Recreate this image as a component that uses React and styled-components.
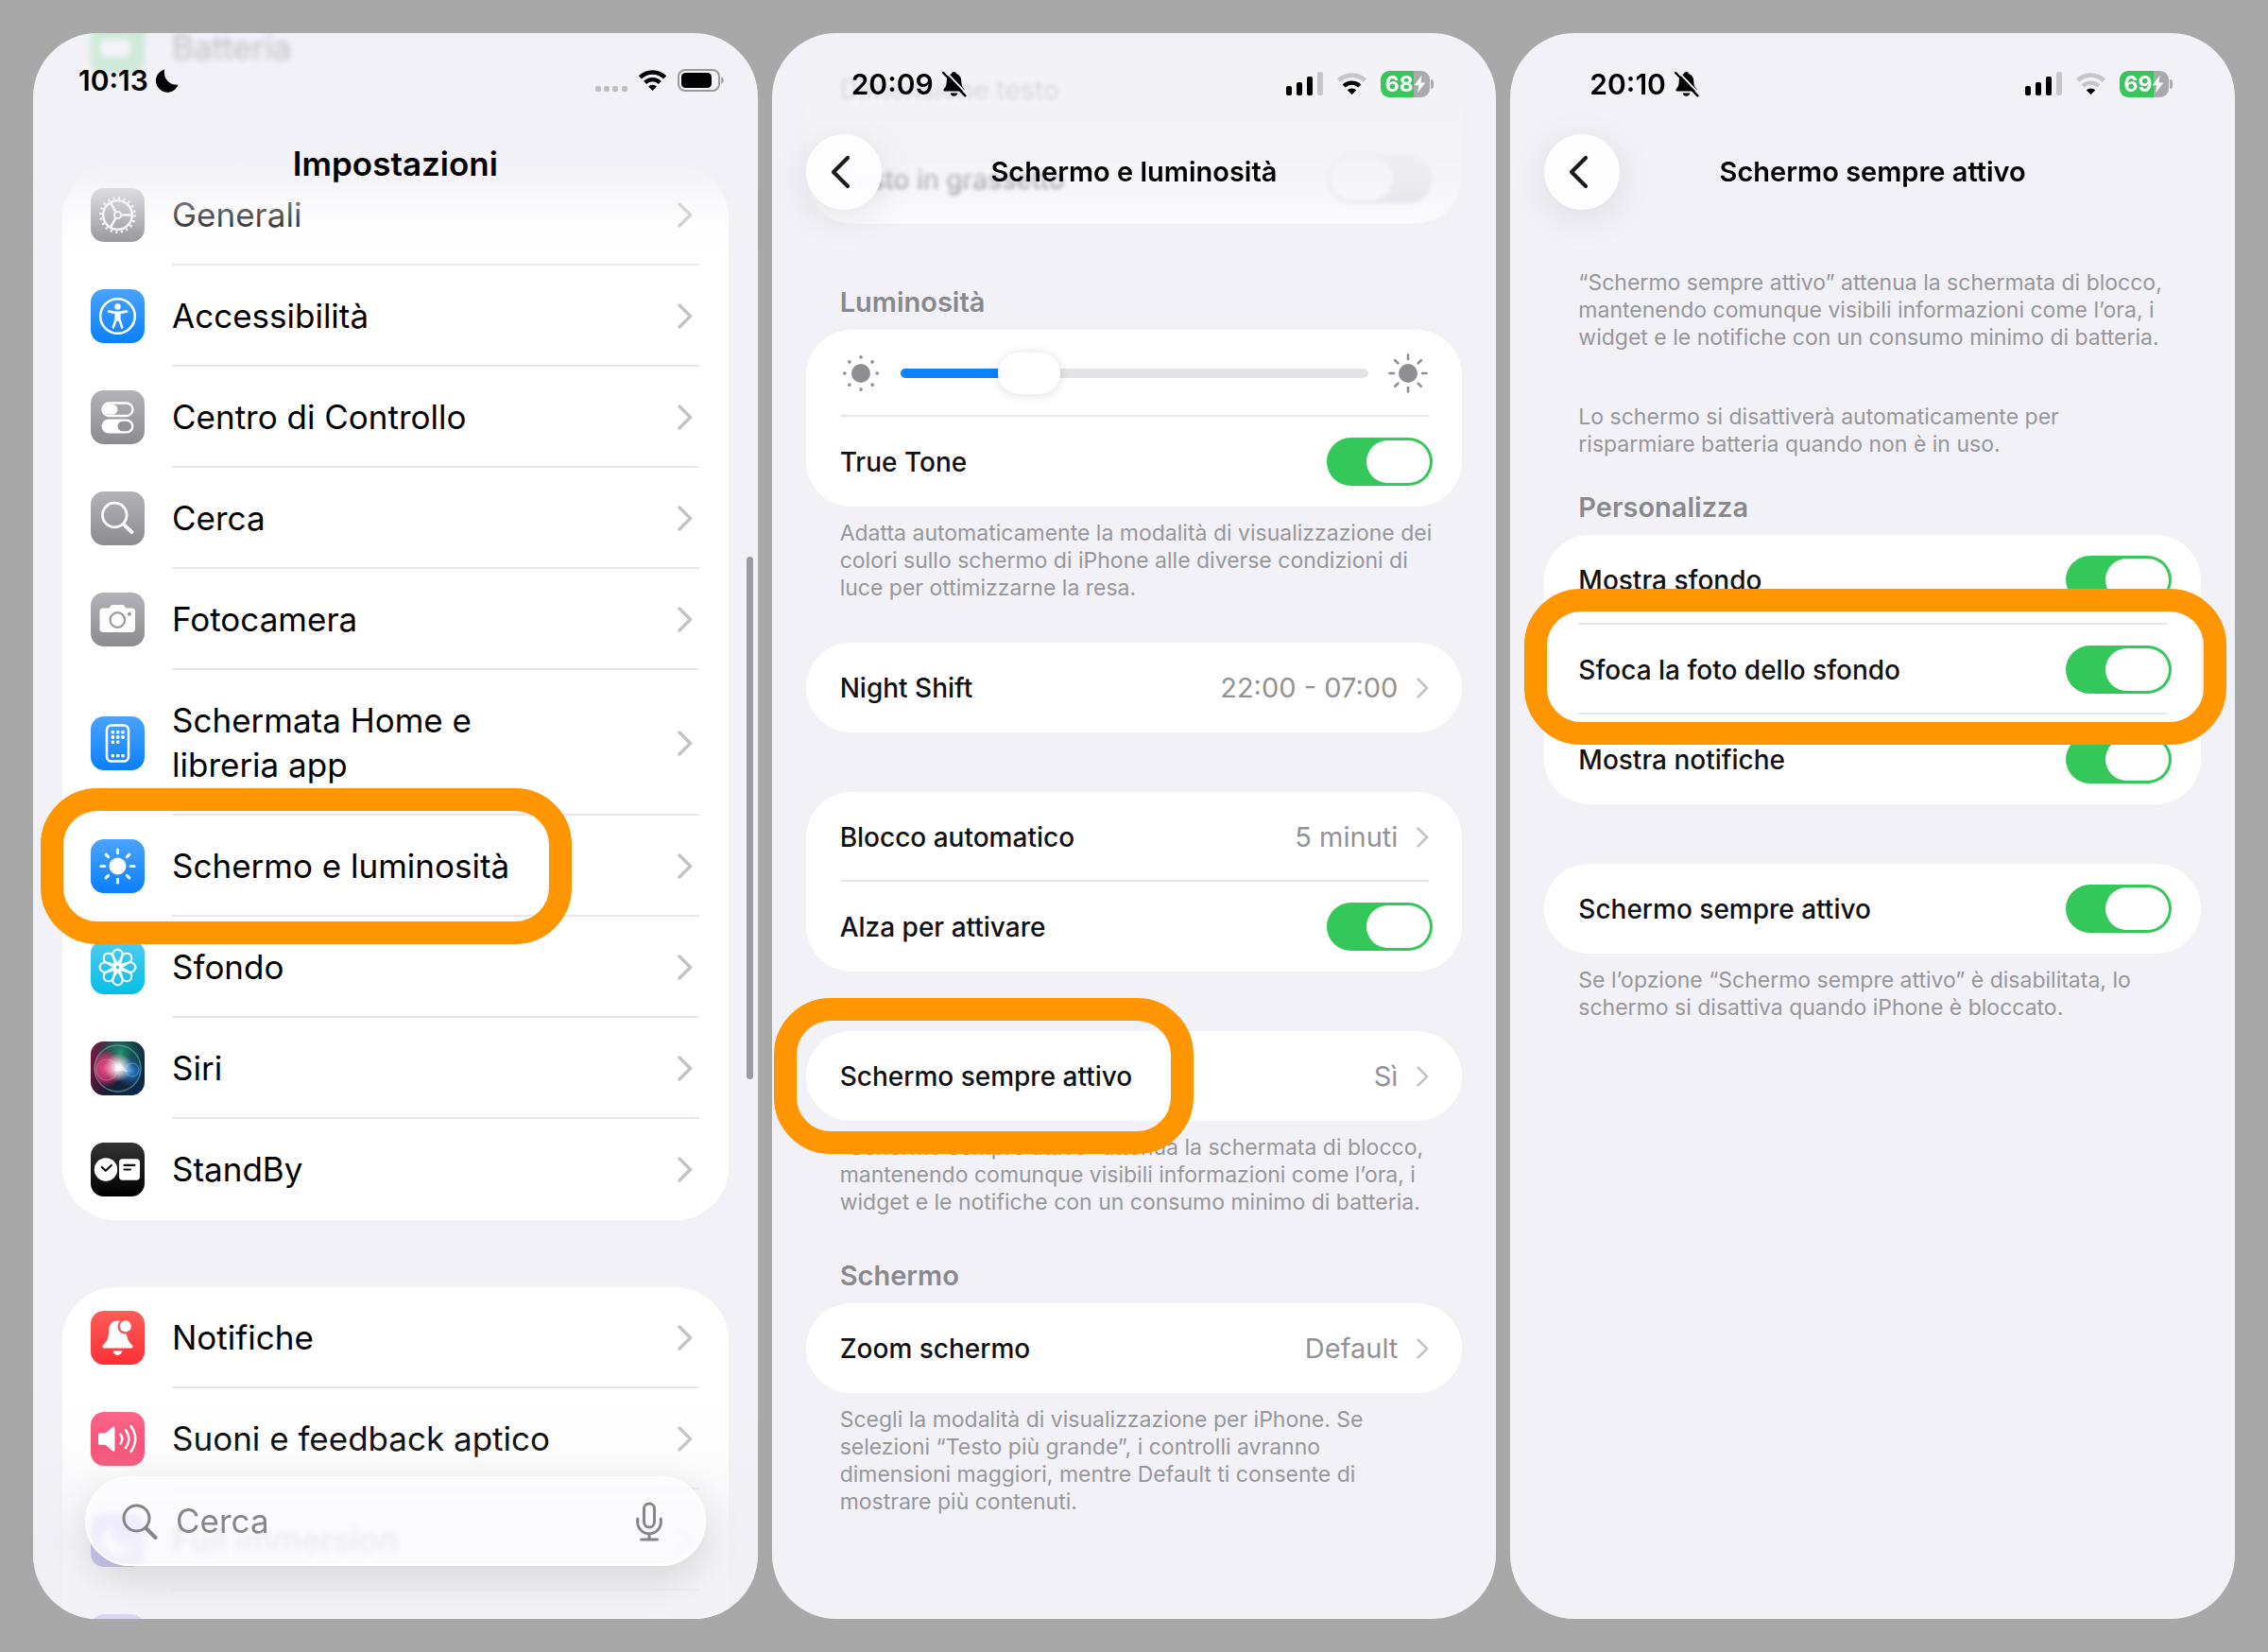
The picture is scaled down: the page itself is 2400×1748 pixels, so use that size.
import React, { useState } from 'react';
import styled, { createGlobalStyle, css } from 'styled-components';

const GlobalStyle = createGlobalStyle`
  * { box-sizing: border-box; }
  html, body, #root { height: 100%; }
  body {
    margin: 0;
    background: #a8a8a8;
    font-family: Inter, "Liberation Sans", sans-serif;
    color: #000;
  }
`;

/* ---------- shell ---------- */

const Page = styled.main`
  display: grid;
  grid-template-columns: repeat(3, minmax(0, 1fr));
  grid-template-rows: minmax(0, 1fr);
  gap: 15px;
  height: 100vh;
  padding: 35px;
`;

const Phone = styled.section`
  position: relative;
  overflow: hidden;
  border-radius: 68px;
  background: #f2f1f7;
`;

const TopBar = styled.header`
  position: absolute;
  inset: 0 0 auto 0;
  z-index: 4;
  padding-bottom: ${(p) => (p.$fade ? 66 : 0)}px;
  background: ${(p) =>
    p.$fade
      ? 'linear-gradient(to bottom, rgba(242,241,247,0) 0, rgba(242,241,247,.5) 80px, #f2f1f7 110px, rgba(242,241,247,.98) 134px, rgba(242,241,247,.72) 158px, rgba(244,243,248,.42) 185px, rgba(248,248,251,.22) 205px, rgba(255,255,255,0) 100%)'
      : 'none'};
`;

const StatusBar = styled.div`
  display: flex;
  align-items: center;
  justify-content: space-between;
  height: ${(p) => (p.$large ? 100 : 107)}px;
  padding: ${(p) => (p.$large ? '0 36px 0 48px' : '0 66px 0 84px')};
`;

const Clock = styled.span`
  display: flex;
  align-items: center;
  gap: 8px;
  font-size: 30px;
  line-height: 36px;
  font-weight: 600;
`;

const Signals = styled.span`
  display: flex;
  align-items: center;
  gap: ${(p) => (p.$large ? 11 : 14)}px;
`;

const Nav = styled.nav`
  display: grid;
  grid-template-columns: 80px 1fr 80px;
  align-items: center;
  justify-items: center;
  height: ${(p) => (p.$large ? 76 : 80)}px;
  padding: 0 36px;
`;

const Title = styled.h1`
  grid-column: 2;
  margin: 0;
  font-size: ${(p) => (p.$large ? 35 : 29)}px;
  line-height: 42px;
  font-weight: 600;
  white-space: nowrap;
`;

const BackButton = styled.button`
  display: grid;
  place-items: center;
  width: 80px;
  height: 80px;
  padding: 0 8px 0 0;
  border: 0;
  border-radius: 50%;
  background: rgba(253, 253, 255, 0.96);
  box-shadow: 0 8px 40px rgba(0, 0, 0, 0.09);
`;

const BatteryPill = styled.span`
  position: relative;
  display: flex;
  align-items: center;
  justify-content: center;
  width: 52px;
  height: 28px;
  margin-right: 4px;
  border-radius: 9px;
  background: linear-gradient(to right, #35c759 ${(p) => p.$level}%, #aaaaae ${(p) => p.$level}%);
  color: #fff;
  font-size: 23px;
  line-height: 28px;
  font-weight: 700;

  &::after {
    content: '';
    position: absolute;
    left: 53px;
    top: 9px;
    width: 3px;
    height: 10px;
    border-radius: 0 3px 3px 0;
    background: #aaaaae;
  }
`;

/* ---------- lists ---------- */

const Content = styled.div`
  display: flex;
  flex-direction: column;
  padding: ${(p) => p.$top}px ${(p) => p.$side}px 0;
`;

const Card = styled.div`
  margin-top: ${(p) => p.$gap || 0}px;
  border-radius: ${(p) => p.$radius || 48}px;
  background: #fff;
`;

const SectionTitle = styled.h2`
  margin: ${(p) => p.$gap}px 36px 11px;
  font-size: 29px;
  line-height: 36px;
  font-weight: 600;
  color: #88888d;
`;

const Footnote = styled.p`
  margin: ${(p) => (p.$gap === undefined ? 14 : p.$gap)}px 24px 0 36px;
  font-size: 23px;
  line-height: 29px;
  color: #96969b;
  white-space: pre-line;
`;

const Ring = styled.span`
  position: absolute;
  z-index: 3;
  top: ${(p) => p.$top}px;
  left: ${(p) => p.$left}px;
  right: ${(p) => p.$right}px;
  height: 165px;
  border: 24px solid #ff9500;
  border-radius: 60px;
  pointer-events: none;
`;

const rowLine = css`
  ${(p) =>
    p.$line &&
    css`
      background-image: linear-gradient(#e8e8eb, #e8e8eb);
      background-repeat: no-repeat;
      background-position: 0 100%;
      background-size: 100% 2px;
    `}
`;

const AppRow = styled.a`
  position: relative;
  display: flex;
  gap: 29px;
  align-items: center;
  height: ${(p) => (p.$tall ? 154 : 107)}px;
  padding: 0 31px 0 30px;
  color: #000;
  text-decoration: none;
`;

const AppRowBody = styled.span`
  flex: 1;
  display: flex;
  align-items: center;
  justify-content: space-between;
  height: 100%;
  padding-right: 7px;
  font-size: 35px;
  line-height: 47px;
  white-space: pre-line;
  ${rowLine}
`;

const optionRow = css`
  position: relative;
  display: block;
  padding: 0 35px 0 36px;
  color: #111113;
  text-decoration: none;
`;
const OptionLink = styled.a`${optionRow}`;
const OptionLabel = styled.label`${optionRow}`;
const OptionBlock = styled.div`${optionRow}`;

const OptionBody = styled.span`
  display: flex;
  align-items: center;
  height: ${(p) => (p.$short ? 92 : 95)}px;
  gap: 20px;
  font-size: 28px;
  line-height: 36px;
  font-weight: 500;
  ${rowLine}
`;

const OptionName = styled.span`
  flex: 1;
`;

const OptionValue = styled.span`
  font-size: 29px;
  font-weight: 400;
  color: #929297;
`;

const Switch = styled.input`
  appearance: none;
  flex: none;
  width: 112px;
  height: 51px;
  margin: 0 -4px 0 0;
  padding: 3px;
  border-radius: 26px;
  background: #dcdce0;

  &::before {
    content: '';
    display: block;
    width: 67px;
    height: 45px;
    border-radius: 23px;
    background: #fff;
  }

  &:checked { background: #34c759; }
  &:checked::before { margin-left: 39px; }
`;

const Slider = styled.input`
  appearance: none;
  flex: 1;
  min-width: 0;
  height: 44px;
  margin: 0;
  background: transparent;

  &::-webkit-slider-runnable-track {
    height: 10px;
    border-radius: 5px;
    background: linear-gradient(to right, #0a84ff ${(p) => p.value}%, #e4e4e6 ${(p) => p.value}%);
  }

  &::-webkit-slider-thumb {
    appearance: none;
    width: 66px;
    height: 44px;
    margin-top: -17px;
    border-radius: 22px;
    background: #fff;
    box-shadow: 0 1px 12px rgba(0, 0, 0, 0.13);
  }
`;

/* Rows that have scrolled up under the translucent bar */
const ScrolledRows = styled.div`
  border-radius: 0 0 48px 48px;
  background: #fff;
  filter: blur(2px);
  mask-image: linear-gradient(to bottom, rgba(0, 0, 0, 0.08) 0, rgba(0, 0, 0, 0.1) 60px, rgba(0, 0, 0, 0.24) 140px, rgba(0, 0, 0, 0.7) 100%);
`;

const ScrolledApp = styled.div`
  position: absolute;
  z-index: 1;
  top: -13px;
  left: 61px;
  display: flex;
  align-items: center;
  gap: 29px;
  height: 57px;
  font-size: 35px;
  line-height: 47px;
  filter: blur(3px);
  opacity: 0.24;
`;

const ScrollThumb = styled.div`
  position: absolute;
  z-index: 4;
  top: 33%;
  bottom: 34%;
  right: 5px;
  width: 7px;
  border-radius: 4px;
  background: #9c9ba1;
`;

const BottomFade = styled.div`
  position: absolute;
  z-index: 4;
  inset: auto 0 0 0;
  padding: 94px 55px 56px;
  background: linear-gradient(to bottom, rgba(240, 239, 245, 0) 0, rgba(240, 239, 244, 0.08) 60px, rgba(240, 239, 244, 0.35) 100px, rgba(240, 239, 244, 0.72) 170px, rgba(240, 239, 244, 0.8) 100%);
`;

const SearchBar = styled.label`
  display: flex;
  align-items: center;
  gap: 19px;
  height: 95px;
  padding: 0 44px 0 37px;
  border: 2px solid rgba(255, 255, 255, 0.8);
  border-radius: 48px;
  background: rgba(252, 251, 255, 0.78);
  box-shadow: 0 14px 44px rgba(0, 0, 0, 0.12);
  backdrop-filter: blur(3px);
`;

const SearchInput = styled.input`
  flex: 1;
  min-width: 0;
  padding: 0;
  border: 0;
  outline: 0;
  background: transparent;
  font: 400 35px/47px Inter, "Liberation Sans", sans-serif;

  &::placeholder { color: #85858a; opacity: 1; }
`;

const MicButton = styled.button`
  display: grid;
  padding: 0;
  border: 0;
  background: transparent;
`;

/* ---------- glyphs ---------- */

const Chevron = ({ large }) => (
  <svg width={large ? 16 : 13} height={large ? 27 : 22} viewBox="0 0 16 27" preserveAspectRatio="none" aria-hidden="true">
    <path d="M2 2 13.6 13.5 2 25" fill="none" stroke="#c3c3c7" strokeWidth="3.4" strokeLinecap="round" strokeLinejoin="round" />
  </svg>
);

const BackGlyph = () => (
  <svg width="22" height="36" viewBox="0 0 22 36" aria-hidden="true">
    <path d="M19 3 4 18l15 15" fill="none" stroke="#1a1a1c" strokeWidth="4.2" strokeLinecap="round" strokeLinejoin="round" />
  </svg>
);

const Moon = () => (
  <svg width="24" height="25" viewBox="0 0 24 25" aria-hidden="true">
    <path d="M9.2.6A13 13 0 0 0 23.6 16.6 12.2 12.2 0 1 1 9.2.6Z" />
  </svg>
);

const BellOff = () => (
  <svg width="27" height="28" viewBox="0 0 27 28" aria-hidden="true">
    <path d="M13.5 1c1.5 0 2.300.8 2.500 1.900C19.500 4 21.300 7 21.300 10.800c0 4.800 1.200 6.600 2.900 8.200.9.900.4 2.500-1 2.500H3.800c-1.400 0-1.900-1.600-1-2.500 1.700-1.600 2.900-3.400 2.900-8.200C5.700 7 7.500 4 11 2.900 11.200 1.800 12 1 13.500 1ZM9.600 23.400h7.800c-.4 2-2 3.300-3.900 3.300s-3.500-1.300-3.900-3.300Z" />
    <path d="M4.300.4 27.500 24.600" stroke="#f2f1f7" strokeWidth="2" />
    <path d="M2.200 2 25.400 26.300" stroke="#000" strokeWidth="2.400" strokeLinecap="round" />
  </svg>
);

const Dots = () => (
  <svg width="34" height="24" viewBox="0 0 34 24" fill="#bdbdc2" aria-hidden="true">
    {[0, 9, 18, 28].map((x) => (
      <rect key={x} x={x} y="18" width="6" height="6" rx="2" />
    ))}
  </svg>
);

const Wifi = ({ level = 3, size = 31 }) => {
  const tone = (n) => (level >= n ? '#000' : '#c6c6ca');
  return (
    <svg width={size} height={Math.round(size * 0.76)} viewBox="0 0 34 26" fill="none" aria-hidden="true">
      <path d="M2.600 9.600a20.500 20.500 0 0 1 28.800 0" stroke={tone(3)} strokeWidth="5" />
      <path d="M8.300 15.600a12.500 12.500 0 0 1 17.400 0" stroke={tone(2)} strokeWidth="4.600" />
      <path d="M17 25.200l-4.900-5.100a7 7 0 0 1 9.800 0Z" fill={tone(1)} />
    </svg>
  );
};

const Bars = () => (
  <svg width="39" height="25" viewBox="0 0 39 25" aria-hidden="true">
    <rect x="0" y="15" width="6" height="10" rx="2" />
    <rect x="11" y="11" width="6" height="14" rx="2" />
    <rect x="22" y="5" width="6" height="20" rx="2" />
    <rect x="33" y="0" width="6" height="25" rx="2" fill="#c6c6ca" />
  </svg>
);

const BatteryFull = () => (
  <svg width="49" height="24" viewBox="0 0 49 24" aria-hidden="true">
    <rect x="1" y="1" width="43" height="22" rx="7" fill="none" stroke="#9a9a9e" strokeWidth="2" />
    <rect x="4" y="4" width="32" height="16" rx="4.500" />
    <path d="M46.200 8.500c3.400 1.200 3.400 5.800 0 7Z" fill="#9a9a9e" />
  </svg>
);

const Bolt = () => (
  <svg width="13" height="20" viewBox="0 0 13 20" aria-hidden="true">
    <path d="M8.600.8.600 11.200h4.800L4 19.200l8.300-10.600H7.400Z" fill="#fff" />
  </svg>
);

const Sun = ({ dim }) => (
  <svg width="44" height="44" viewBox="-22 -22 44 44" aria-hidden="true">
    <circle r="10" fill="#8e8e93" />
    {[0, 45, 90, 135, 180, 225, 270, 315].map((a) => (
      <path
        key={a}
        d={dim ? 'M0-17.300V-17' : 'M0-19.500V-15'}
        transform={`rotate(${a})`}
        stroke="#8e8e93"
        strokeWidth={dim ? 3.4 : 2.6}
        strokeLinecap="round"
      />
    ))}
  </svg>
);

const SearchGlyph = () => (
  <svg width="38" height="38" viewBox="0 0 38 38" fill="none" stroke="#85858a" strokeLinecap="round" aria-hidden="true">
    <circle cx="15.500" cy="15.500" r="13.500" strokeWidth="3" />
    <path d="M25.500 26 35.500 36" strokeWidth="4" />
  </svg>
);

const MicGlyph = () => (
  <svg width="28" height="42" viewBox="0 0 28 42" fill="none" stroke="#85858a" strokeWidth="3" strokeLinecap="round" aria-hidden="true">
    <rect x="8.500" y="2" width="11" height="25" rx="5.500" />
    <path d="M1.700 18v3.500a12.300 12.300 0 0 0 24.600 0V18M14 34v6M5.500 40h17" />
  </svg>
);

const tiles = {
  gray: ['#b3b2b8', '#8b8b90'],
  blue: ['#4ba3fb', '#0a80fb'],
  cyan: ['#4fcbf0', '#06bfe6'],
  red: ['#fd5c57', '#fd3038'],
  pink: ['#fd6186', '#f4365f'],
  black: ['#333333', '#000000'],
  indigo: ['#8077ee', '#5b50d8'],
  green: ['#62dd78', '#34c759'],
};

const TileSvg = styled.svg`
  flex: none;
`;

const Tile = ({ tone, children }) => (
  <TileSvg width="57" height="57" viewBox="0 0 57 57" aria-hidden="true">
    <defs>
      <linearGradient id={`tile-${tone}`} x1="0" y1="0" x2="0" y2="1">
        <stop offset="0" stopColor={tiles[tone][0]} />
        <stop offset="1" stopColor={tiles[tone][1]} />
      </linearGradient>
    </defs>
    <rect width="57" height="57" rx="14" fill={`url(#tile-${tone})`} />
    {children}
  </TileSvg>
);

const eight = [0, 45, 90, 135, 180, 225, 270, 315];

const icons = {
  battery: (
    <Tile tone="green">
      <rect x="10" y="20" width="32" height="18" rx="5" fill="#fff" />
    </Tile>
  ),
  general: (
    <Tile tone="gray">
      <g transform="translate(28.500 28.500)" fill="none" stroke="#f4f4f6">
        <circle r="15.300" strokeWidth="2.600" />
        <circle r="18" strokeWidth="3" strokeDasharray="2.100 3.555" />
        <circle r="3.600" strokeWidth="2" />
        {[0, 120, 240].map((a) => (
          <path key={a} d="M4 0H15" strokeWidth="2.600" transform={`rotate(${a})`} />
        ))}
      </g>
    </Tile>
  ),
  accessibility: (
    <Tile tone="blue">
      <circle cx="28.500" cy="28.500" r="18.300" fill="none" stroke="#fff" strokeWidth="2.600" />
      <circle cx="28.500" cy="18.500" r="3.200" fill="#fff" />
      <path
        d="M19 23.600c3 .8 6 1.200 9.500 1.200s6.500-.4 9.500-1.200M28.500 25v7.500M26.700 25.500v6.500L23.800 40.500M30.300 25.500v6.500L33.200 40.500"
        fill="none" stroke="#fff" strokeWidth="2.600" strokeLinecap="round" strokeLinejoin="round"
      />
    </Tile>
  ),
  control: (
    <Tile tone="gray">
      <rect x="12.500" y="13.500" width="32" height="13.500" rx="6.750" fill="none" stroke="#fff" strokeWidth="2.400" />
      <rect x="13.500" y="15" width="15" height="10.500" rx="5.250" fill="#fff" />
      <rect x="11.500" y="30.500" width="34" height="15" rx="7.500" fill="#fff" />
      <rect x="28.500" y="32.700" width="14.500" height="10.600" rx="5.300" fill="#919196" />
    </Tile>
  ),
  search: (
    <Tile tone="gray">
      <circle cx="25.300" cy="25" r="12.800" fill="none" stroke="#fff" strokeWidth="2.800" />
      <path d="M34.800 34.800 43.500 43" stroke="#fff" strokeWidth="3.800" strokeLinecap="round" />
    </Tile>
  ),
  camera: (
    <Tile tone="gray">
      <path
        d="M13 16.500h6.200c1.300-.2 1.800-3.500 3.800-3.500h11c2 0 2.500 3.300 3.800 3.500H43.500c2.200 0 3.500 1.300 3.500 3.500v18.500c0 2.200-1.300 3.500-3.500 3.500H13c-2.200 0-3.500-1.300-3.500-3.500V20c0-2.200 1.300-3.500 3.500-3.500Z"
        fill="#fff"
      />
      <circle cx="28.300" cy="29" r="7.800" fill="none" stroke="#98989d" strokeWidth="2.200" />
      <circle cx="41" cy="22.800" r="2" fill="#98989d" />
    </Tile>
  ),
  home: (
    <Tile tone="blue">
      <rect x="17" y="9.500" width="23" height="38" rx="5" fill="none" stroke="#fff" strokeWidth="2.600" />
      {[[21.700, 15], [27, 15], [32.300, 15], [21.700, 20.300], [27, 20.300], [32.300, 20.300], [21.700, 25.600], [27, 25.600], [21.700, 40], [27, 40], [32.300, 40]].map(([x, y]) => (
        <rect key={`${x}-${y}`} x={x} y={y} width="3.400" height="3.400" rx="0.800" fill="#fff" />
      ))}
    </Tile>
  ),
  display: (
    <Tile tone="blue">
      <g transform="translate(28.500 28.500)">
        <circle r="9" fill="#fff" />
        {eight.map((a) => (
          <path key={a} d="M0-17.500V-13.800" stroke="#fff" strokeWidth="3" strokeLinecap="round" transform={`rotate(${a})`} />
        ))}
      </g>
    </Tile>
  ),
  wallpaper: (
    <Tile tone="cyan">
      <g transform="translate(28.500 28.500)" fill="none" stroke="#fff" strokeWidth="2.100" strokeLinejoin="round">
        {eight.map((a) => (
          <path key={a} d="M0-3 4.300-10.900A5.100 5.100 0 1 0-4.300-10.900Z" transform={`rotate(${a})`} />
        ))}
        <circle r="2.600" strokeWidth="1.600" />
      </g>
    </Tile>
  ),
  siri: (
    <TileSvg width="57" height="57" viewBox="0 0 57 57" aria-hidden="true">
      <defs>
        <linearGradient id="siri-base" x1="0" y1="0.300" x2="1" y2="0.700">
          <stop offset="0" stopColor="#7a1240" />
          <stop offset="0.450" stopColor="#1d1c33" />
          <stop offset="1" stopColor="#0b2a4c" />
        </linearGradient>
        <radialGradient id="siri-green" cx="0.550" cy="0.200" r="0.550">
          <stop offset="0" stopColor="#1fa37a" stopOpacity="0.900" />
          <stop offset="1" stopColor="#0d4a40" stopOpacity="0" />
        </radialGradient>
        <radialGradient id="siri-pink" cx="0.250" cy="0.500" r="0.400">
          <stop offset="0" stopColor="#f0508c" />
          <stop offset="0.600" stopColor="#d83c74" stopOpacity="0.700" />
          <stop offset="1" stopColor="#c32a63" stopOpacity="0" />
        </radialGradient>
        <radialGradient id="siri-blue" cx="0.780" cy="0.560" r="0.340">
          <stop offset="0" stopColor="#2f8fe6" />
          <stop offset="1" stopColor="#175a9e" stopOpacity="0" />
        </radialGradient>
        <radialGradient id="siri-glow" cx="0.520" cy="0.480" r="0.300">
          <stop offset="0" stopColor="#fff" />
          <stop offset="0.250" stopColor="#fff" stopOpacity="0.850" />
          <stop offset="1" stopColor="#fff" stopOpacity="0" />
        </radialGradient>
      </defs>
      <rect width="57" height="57" rx="14" fill="url(#siri-base)" />
      <rect width="57" height="57" rx="14" fill="url(#siri-green)" />
      <circle cx="28.500" cy="28.500" r="25" fill="url(#siri-pink)" />
      <circle cx="28.500" cy="28.500" r="25" fill="url(#siri-blue)" />
      <circle cx="28.500" cy="28.500" r="24.500" fill="none" stroke="#66b9b4" strokeOpacity="0.600" strokeWidth="1.300" />
      <circle cx="17" cy="30" r="11" fill="none" stroke="#f58ab4" strokeOpacity="0.500" />
      <circle cx="44" cy="30" r="7" fill="none" stroke="#6db8f5" strokeOpacity="0.600" />
      <circle cx="28.500" cy="28.500" r="25" fill="url(#siri-glow)" />
      <path d="M24 31 31 24l9 8-8-1Z" fill="#fff" fillOpacity="0.500" />
    </TileSvg>
  ),
  standby: (
    <Tile tone="black">
      <circle cx="16" cy="28.500" r="12.200" fill="#fff" />
      <path d="M11.800 26 15.800 29.800 21.800 24" fill="none" stroke="#111" strokeWidth="2.200" strokeLinecap="round" strokeLinejoin="round" />
      <rect x="30" y="17.300" width="22" height="22.400" rx="3.600" fill="#fff" />
      <path d="M35.500 23.800h11M35.500 28.500h6.500" stroke="#111" strokeWidth="2.200" strokeLinecap="round" />
    </Tile>
  ),
  notifications: (
    <Tile tone="red">
      <path
        d="M28.500 10.500c-6.500 0-9.300 5-9.300 10.500 0 8.500-2.800 12-6.200 15.500-1 1.200-.5 3 1.300 3h28.400c1.800 0 2.300-1.800 1.300-3-3.400-3.500-6.200-7-6.200-15.500 0-5.500-2.800-10.500-9.300-10.500Z"
        fill="#fff"
      />
      <path d="M23.500 42.300h10c-.8 3-2.600 4.600-5 4.600s-4.200-1.600-5-4.600Z" fill="#fff" />
      <circle cx="36.500" cy="16.500" r="8" fill="#fd524f" />
      <circle cx="36.800" cy="16.300" r="6" fill="#fff" />
    </Tile>
  ),
  sounds: (
    <Tile tone="pink">
      <path d="M9 22.500h6.500l7.600-6.600c1.200-1 2.400-.5 2.400 1v23.400c0 1.500-1.200 2-2.400 1l-7.600-6.600H9c-.7 0-1-.4-1-1V23.500c0-.6.3-1 1-1Z" fill="#fff" />
      <g fill="none" stroke="#fff" strokeWidth="2.500" strokeLinecap="round">
        <path d="M31.500 23.500q3.600 5 0 10" />
        <path d="M37 19q6.800 9.500 0 19" />
        <path d="M42.500 15q9.500 13.500 0 27" />
      </g>
    </Tile>
  ),
  focus: (
    <Tile tone="indigo">
      <path d="M23 14a17 17 0 0 0 20 22A16 16 0 1 1 23 14Z" fill="#fff" />
    </Tile>
  ),
  screenTime: <Tile tone="indigo" />,
};

/* ---------- parts ---------- */

function AppLink({ icon, label, tall, last, children }) {
  return (
    <AppRow href="#" $tall={tall}>
      {icons[icon]}
      <AppRowBody $line={!last}>
        {label}
        {label && <Chevron large />}
      </AppRowBody>
      {children}
    </AppRow>
  );
}

function ValueRow({ label, value, line, children }) {
  return (
    <OptionLink href="#">
      <OptionBody $line={line}>
        <OptionName>{label}</OptionName>
        {value && <OptionValue>{value}</OptionValue>}
        <Chevron />
      </OptionBody>
      {children}
    </OptionLink>
  );
}

function SwitchRow({ label, line, off, children }) {
  return (
    <OptionLabel>
      <OptionBody $line={line}>
        <OptionName>{label}</OptionName>
        <Switch type="checkbox" role="switch" defaultChecked={!off} />
      </OptionBody>
      {children}
    </OptionLabel>
  );
}

function DetailHeader({ time, title, wifi, battery }) {
  return (
    <TopBar>
      <StatusBar>
        <Clock>{time}<BellOff /></Clock>
        <Signals>
          <Bars />
          <Wifi level={wifi} size={33} />
          <BatteryPill $level={battery}>{battery}<Bolt /></BatteryPill>
        </Signals>
      </StatusBar>
      <Nav>
        <BackButton type="button" aria-label="Indietro"><BackGlyph /></BackButton>
        <Title>{title}</Title>
      </Nav>
    </TopBar>
  );
}

function SettingsScreen() {
  return (
    <Phone>
      <ScrolledApp>{icons.battery}Batteria</ScrolledApp>
      <TopBar $fade>
        <StatusBar $large>
          <Clock>10:13<Moon /></Clock>
          <Signals $large><Dots /><Wifi /><BatteryFull /></Signals>
        </StatusBar>
        <Nav $large><Title $large>Impostazioni</Title></Nav>
      </TopBar>
      <Content $top={139} $side={31}>
        <Card $radius={56}>
          <AppLink icon="general" label="Generali" />
          <AppLink icon="accessibility" label="Accessibilità" />
          <AppLink icon="control" label="Centro di Controllo" />
          <AppLink icon="search" label="Cerca" />
          <AppLink icon="camera" label="Fotocamera" />
          <AppLink icon="home" label={'Schermata Home e\nlibreria app'} tall />
          <AppLink icon="display" label="Schermo e luminosità">
            <Ring $top={-29} $left={-23} $right={166} />
          </AppLink>
          <AppLink icon="wallpaper" label="Sfondo" />
          <AppLink icon="siri" label="Siri" />
          <AppLink icon="standby" label="StandBy" last />
        </Card>
        <Card $radius={56} $gap={71}>
          <AppLink icon="notifications" label="Notifiche" />
          <AppLink icon="sounds" label="Suoni e feedback aptico" />
          <AppLink icon="focus" label="Full immersion" />
          <AppLink icon="screenTime" last />
        </Card>
      </Content>
      <ScrollThumb />
      <BottomFade>
        <SearchBar>
          <SearchGlyph />
          <SearchInput type="search" placeholder="Cerca" aria-label="Cerca" />
          <MicButton type="button" aria-label="Dettatura"><MicGlyph /></MicButton>
        </SearchBar>
      </BottomFade>
    </Phone>
  );
}

function DisplayScreen() {
  const [brightness, setBrightness] = useState(24);
  return (
    <Phone>
      <DetailHeader time="20:09" title="Schermo e luminosità" wifi={2} battery={68} />
      <Content $top={12} $side={36}>
        <ScrolledRows>
          <ValueRow label="Dimensione testo" />
          <SwitchRow label="Testo in grassetto" off />
        </ScrolledRows>
        <SectionTitle $gap={65}>Luminosità</SectionTitle>
        <Card>
          <OptionBlock>
            <OptionBody $short $line>
              <Sun dim />
              <Slider
                type="range"
                aria-label="Luminosità"
                value={brightness}
                onChange={(e) => setBrightness(Number(e.target.value))}
              />
              <Sun />
            </OptionBody>
          </OptionBlock>
          <SwitchRow label="True Tone" />
        </Card>
        <Footnote>
          {'Adatta automaticamente la modalità di visualizzazione dei\ncolori sullo schermo di iPhone alle diverse condizioni di\nluce per ottimizzarne la resa.'}
        </Footnote>
        <Card $gap={43}>
          <ValueRow label="Night Shift" value="22:00 - 07:00" />
        </Card>
        <Card $gap={63}>
          <ValueRow label="Blocco automatico" value="5 minuti" line />
          <SwitchRow label="Alza per attivare" />
        </Card>
        <Card $gap={63}>
          <ValueRow label="Schermo sempre attivo" value="Sì">
            <Ring $top={-35} $left={-34} $right={284} />
          </ValueRow>
        </Card>
        <Footnote>
          {'“Schermo sempre attivo” attenua la schermata di blocco,\nmantenendo comunque visibili informazioni come l’ora, i\nwidget e le notifiche con un consumo minimo di batteria.'}
        </Footnote>
        <SectionTitle $gap={45}>Schermo</SectionTitle>
        <Card>
          <ValueRow label="Zoom schermo" value="Default" />
        </Card>
        <Footnote>
          {'Scegli la modalità di visualizzazione per iPhone. Se\nselezioni “Testo più grande”, i controlli avranno\ndimensioni maggiori, mentre Default ti consente di\nmostrare più contenuti.'}
        </Footnote>
      </Content>
    </Phone>
  );
}

function AlwaysOnScreen() {
  return (
    <Phone>
      <DetailHeader time="20:10" title="Schermo sempre attivo" wifi={1} battery={69} />
      <Content $top={250} $side={36}>
        <Footnote $gap={0}>
          {'“Schermo sempre attivo” attenua la schermata di blocco,\nmantenendo comunque visibili informazioni come l’ora, i\nwidget e le notifiche con un consumo minimo di batteria.'}
        </Footnote>
        <Footnote $gap={55}>
          {'Lo schermo si disattiverà automaticamente per\nrisparmiare batteria quando non è in uso.'}
        </Footnote>
        <SectionTitle $gap={34}>Personalizza</SectionTitle>
        <Card>
          <SwitchRow label="Mostra sfondo" line />
          <SwitchRow label="Sfoca la foto dello sfondo" line>
            <Ring $top={-38} $left={-21} $right={-27} />
          </SwitchRow>
          <SwitchRow label="Mostra notifiche" />
        </Card>
        <Card $gap={63}>
          <SwitchRow label="Schermo sempre attivo" />
        </Card>
        <Footnote>
          {'Se l’opzione “Schermo sempre attivo” è disabilitata, lo\nschermo si disattiva quando iPhone è bloccato.'}
        </Footnote>
      </Content>
    </Phone>
  );
}

export default function App() {
  return (
    <>
      <GlobalStyle />
      <Page>
        <SettingsScreen />
        <DisplayScreen />
        <AlwaysOnScreen />
      </Page>
    </>
  );
}
